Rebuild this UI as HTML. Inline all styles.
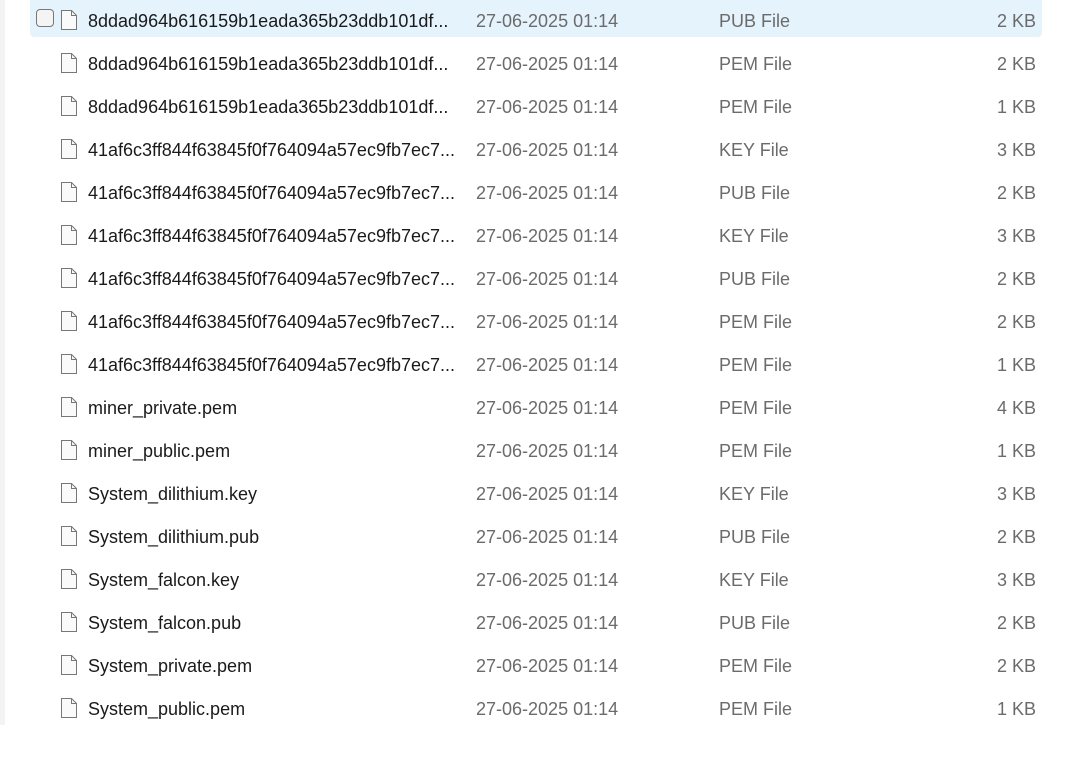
<!DOCTYPE html><html><head><style>
body{margin:0;width:1070px;height:761px;background:#fff;position:relative;overflow:hidden;font-family:"Liberation Sans",sans-serif;font-size:18px}
.lb{position:absolute;left:0;top:0;width:5px;height:725px;background:#f3f3f3}
.hl{position:absolute;left:30px;top:0;width:1012px;height:37px;background:#e5f3fd;border-radius:0 0 4px 4px}
.cb{position:absolute;left:36px;top:9px;width:18px;height:18px;border:1px solid #777;border-radius:4px;background:#f4f4f4;box-sizing:border-box}
.r{position:absolute;left:0;height:43px;width:1070px;line-height:43px}
.r svg{position:absolute;left:60px;top:10px}
.n{position:absolute;left:88px;color:#1a1a1a}
.d{position:absolute;left:476px;color:#6b6b6b}
.t{position:absolute;left:719px;color:#6b6b6b}
.s{position:absolute;right:34px;color:#6b6b6b}
</style></head><body>
<div class="lb"></div><div class="hl"></div><div class="cb"></div>
<div id="c"></div>
<script>
var rows=[["8ddad964b616159b1eada365b23ddb101df...","PUB","2"],["8ddad964b616159b1eada365b23ddb101df...","PEM","2"],["8ddad964b616159b1eada365b23ddb101df...","PEM","1"],["41af6c3ff844f63845f0f764094a57ec9fb7ec7...","KEY","3"],["41af6c3ff844f63845f0f764094a57ec9fb7ec7...","PUB","2"],["41af6c3ff844f63845f0f764094a57ec9fb7ec7...","KEY","3"],["41af6c3ff844f63845f0f764094a57ec9fb7ec7...","PUB","2"],["41af6c3ff844f63845f0f764094a57ec9fb7ec7...","PEM","2"],["41af6c3ff844f63845f0f764094a57ec9fb7ec7...","PEM","1"],["miner_private.pem","PEM","4"],["miner_public.pem","PEM","1"],["System_dilithium.key","KEY","3"],["System_dilithium.pub","PUB","2"],["System_falcon.key","KEY","3"],["System_falcon.pub","PUB","2"],["System_private.pem","PEM","2"],["System_public.pem","PEM","1"]];
var h="";rows.forEach(function(r,i){h+='<div class="r" style="top:'+(i*43)+'px"><svg width="18" height="20" viewBox="0 0 18 20"><path d="M1.5 0.5H11.5L16.5 5.5V19.5H1.5Z" fill="#fafafa" stroke="#777"/><path d="M11.5 0.5V5.5H16.5" fill="none" stroke="#777"/></svg><span class="n">'+r[0]+'</span><span class="d">27-06-2025 01:14</span><span class="t">'+r[1]+' File</span><span class="s">'+r[2]+' KB</span></div>';});
document.getElementById("c").innerHTML=h;
</script>
</body></html>
